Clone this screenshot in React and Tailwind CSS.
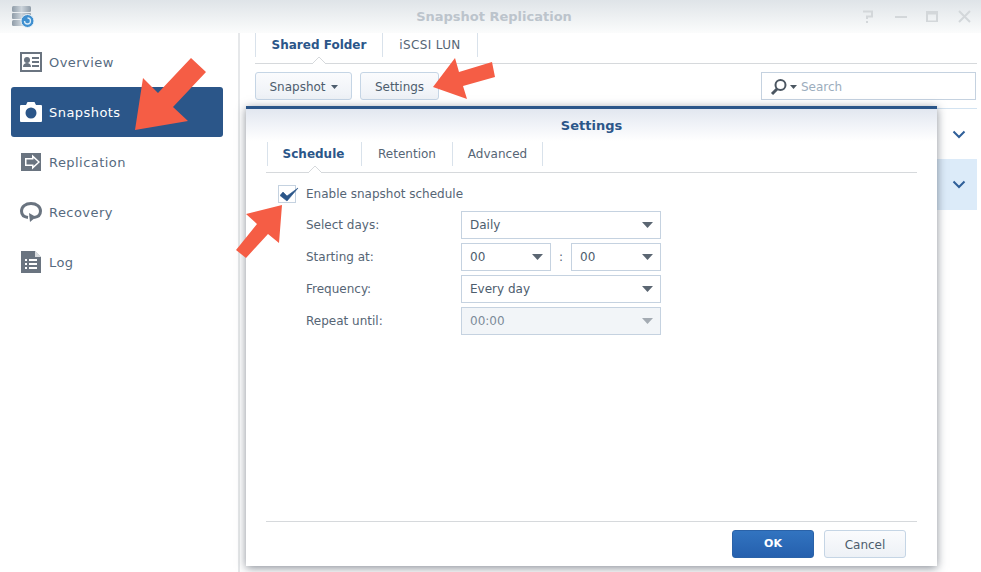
const font = { fontFamily: '"DejaVu Sans", Verdana, sans-serif' };

function Arrow({ points, x, y, w, h }) {
  return (
    <svg className="absolute z-20" style={{ left: x, top: y }} width={w} height={h} viewBox={`${x} ${y} ${w} ${h}`}>
      <polygon points={points} fill="#f55d45" />
    </svg>
  );
}

function OverviewIcon() {
  return (
    <svg width="22" height="20" viewBox="0 0 22 20">
      <path fillRule="evenodd" fill="#6a7480" d="M0 0h22v20H0zM2 2v16h18V2z" />
      <circle cx="7" cy="8" r="3" fill="#6a7480" />
      <path fill="#6a7480" d="M3 15c0-3 2-4 4-4s4 1 4 4zM12 5h7v2h-7zM12 9h7v2h-7zM12 13h7v2h-7z" />
    </svg>
  );
}
function CameraIcon() {
  return (
    <svg width="22" height="20" viewBox="0 0 22 20">
      <path fill="#fff" fillRule="evenodd" d="M1 3h5l1.500-3h7L16 3h5a1 1 0 0 1 1 1v15a1 1 0 0 1-1 1H1a1 1 0 0 1-1-1V4a1 1 0 0 1 1-1zM11 5.500a5.500 5.500 0 1 0 0 11 5.500 5.500 0 0 0 0-11z" />
    </svg>
  );
}
function ReplicationIcon() {
  return (
    <svg width="20" height="18" viewBox="0 0 20 18">
      <path fill="#6a7480" d="M0 0h20v18H0z" />
      <path fill="#fff" fillRule="evenodd" d="M11 1.500v3.500H4v8h7v3.500L19 9zM12.500 5l4.500 4-4.500 4v-1.500H5.500v-5h7z" />
    </svg>
  );
}
function RecoveryIcon() {
  return (
    <svg width="22" height="20" viewBox="0 0 22 20">
      <path fill="none" stroke="#6a7480" strokeWidth="3" d="M8 15.500C4 15 1.500 12.500 1.500 9 1.500 4.500 5.500 1.500 11 1.500s9.500 3 9.500 7.500c0 3.500-2.500 6-6.500 6.500" />
      <path fill="#6a7480" d="M9 11l7 4-6 5z" />
    </svg>
  );
}
function LogIcon() {
  return (
    <svg width="20" height="22" viewBox="0 0 20 22">
      <path fill="#6a7480" fillRule="evenodd" d="M0 0h14l6 6v16H0zM4 8v2h2V8zM8 8v2h8V8zM4 12v2h2v-2zM8 12v2h8v-2zM4 16v2h2v-2zM8 16v2h8v-2z" />
      <path fill="#fff" d="M14 0v6h6z" fillOpacity="0.75" />
    </svg>
  );
}

function NavItem({ icon, label, active }) {
  return (
    <div className={`h-[50px] flex items-center rounded-[3px] pl-[9px] ${active ? "bg-[#2b5689] text-white" : "text-[#566a80]"}`}>
      <span className="w-[22px] flex justify-center shrink-0">{icon}</span>
      <span className="ml-[7px] mt-px text-[13px] tracking-[0.45px]">{label}</span>
    </div>
  );
}

function Chevron() {
  return (
    <svg width="14" height="9" viewBox="0 0 14 9">
      <path d="M1.500 1.500 7 7l5.500-5.500" fill="none" stroke="#2f5f99" strokeWidth="2" />
    </svg>
  );
}

function Caret({ dim }) {
  return (
    <svg width="14" height="7" viewBox="0 0 14 7" className="shrink-0">
      <path d="M0 0h11L5.500 6z" fill={dim ? "#a4abb3" : "#5b6672"} />
    </svg>
  );
}

function Select({ value, disabled, className }) {
  return (
    <div className={`h-7 border border-[#c5d2e0] flex items-center justify-between pl-[8px] pr-[4px] ${disabled ? "bg-[#f2f5f8] text-[#7d8b99]" : "bg-white text-[#4d5d6d]"} ${className}`}>
      <span>{value}</span>
      <Caret dim={disabled} />
    </div>
  );
}

function FormRow({ label, children }) {
  return (
    <div className="flex items-center h-7">
      <span className="w-[155px] text-[#566575]">{label}</span>
      {children}
    </div>
  );
}

function TabCaret() {
  return (
    <svg width="14" height="7" viewBox="0 0 14 7" className="absolute bottom-[-7px] left-1/2 -translate-x-1/2">
      <path d="M0 7 7 0l7 7" fill="#fff" stroke="#d6d9dc" />
    </svg>
  );
}

export default function App() {
  return (
    <div style={font} className="relative w-[981px] h-[572px] overflow-hidden bg-white text-xs">
      <header className="h-[33px] bg-gradient-to-b from-[#dfe4e8] to-[#fbfcfc] flex items-center pl-[12px] pr-[8px]">
        <svg width="22" height="22" viewBox="0 0 22 22" className="shrink-0 mt-[1px]">
          <defs>
            <linearGradient id="db" x1="0" y1="0" x2="1" y2="0">
              <stop offset="0" stopColor="#8f9ca8" />
              <stop offset="0.5" stopColor="#cdd5dc" />
              <stop offset="1" stopColor="#8f9ca8" />
            </linearGradient>
          </defs>
          <rect x="0" y="0" width="19" height="6" rx="1.500" fill="url(#db)" />
          <rect x="0" y="7" width="19" height="6" rx="1" fill="url(#db)" />
          <rect x="0" y="14" width="19" height="6" rx="1.500" fill="url(#db)" />
          <circle cx="15.500" cy="15" r="6.500" fill="#3f8fcf" stroke="#eaf2f8" />
          <path d="M12.500 15a3 3 0 1 0 3-3" fill="none" stroke="#d8ebf8" strokeWidth="1.300" />
        </svg>
        <div className="flex-1 text-center text-[13px] font-bold text-[#bcc4cc] pl-[93px]">Snapshot Replication</div>
        <div className="flex items-center gap-[16px]">
          <svg width="16" height="14" viewBox="0 0 16 14"><path d="M2 1.500h9v5H6V9M6 11v2" fill="none" stroke="#d3d7da" strokeWidth="2" /></svg>
          <svg width="16" height="14" viewBox="0 0 16 14"><path d="M2 6h12v2H2z" fill="#d3d7da" /></svg>
          <svg width="16" height="14" viewBox="0 0 16 14"><path d="M1 1h12v11H1zM3 4.500v6h8v-6z" fill="#d3d7da" fillRule="evenodd" /></svg>
          <svg width="16" height="14" viewBox="0 0 16 14"><path d="M2 1l11 11M13 1 2 12" stroke="#d3d7da" strokeWidth="2" /></svg>
        </div>
      </header>

      <div className="flex h-[539px]">
        <aside className="w-[240px] shrink-0 border-r-2 border-[#e6e8ea] pl-[11px] pr-[15px] pt-[4px]">
          <NavItem icon={<OverviewIcon />} label="Overview" />
          <NavItem icon={<CameraIcon />} label="Snapshots" active />
          <NavItem icon={<ReplicationIcon />} label="Replication" />
          <NavItem icon={<RecoveryIcon />} label="Recovery" />
          <NavItem icon={<LogIcon />} label="Log" />
        </aside>

        <main className="flex-1 pl-[15px] pr-[4px]">
          <div className="flex h-[31px] border-b border-[#d6d9dc]">
            <div className="relative h-[24px] w-[128px] flex items-center justify-center border-l border-r border-[#d9e2eb] font-bold text-[#2b5689]">
              Shared Folder
              <TabCaret />
            </div>
            <div className="h-[24px] w-[95px] flex items-center justify-center border-r border-[#d9e2eb] text-[#566575] tracking-[0.35px]">iSCSI LUN</div>
          </div>

          <div className="flex items-center justify-between mt-[8px]">
            <div className="flex gap-2">
              <button className="h-7 w-[97px] pt-px rounded-[3px] border border-[#c5d5e5] bg-gradient-to-b from-[#fafbfd] to-[#edf1f6] text-[#4d5d6d] flex items-center justify-center gap-[5px]">
                Snapshot
                <svg width="7" height="4" viewBox="0 0 7 4"><path d="M0 0h7L3.500 4z" fill="#4d5d6d" /></svg>
              </button>
              <button className="h-7 w-[79px] pt-px rounded-[3px] border border-[#c5d5e5] bg-gradient-to-b from-[#fafbfd] to-[#edf1f6] text-[#4d5d6d]">Settings</button>
            </div>
            <div className="h-7 w-[215px] mr-px pt-px border border-[#c5d2e0] flex items-center pl-[8px]">
              <svg width="18" height="18" viewBox="0 0 18 18" className="shrink-0">
                <circle cx="10.500" cy="7" r="5" fill="none" stroke="#4b5661" strokeWidth="2" />
                <path d="M7 11 2 16" stroke="#4b5661" strokeWidth="3" />
              </svg>
              <svg width="7" height="4" viewBox="0 0 7 4" className="ml-[2px]"><path d="M0 0h7L3.500 4z" fill="#4b5661" /></svg>
              <span className="ml-[4px] text-[#9cadbd]">Search</span>
            </div>
          </div>

          <div className="mt-[8px] border-t border-[#d3e3f1]">
            <div className="h-[50px] flex items-center justify-end pr-[11px]"><Chevron /></div>
            <div className="h-[51px] bg-[#dcebf9] flex items-center justify-end pr-[11px]"><Chevron /></div>
          </div>
        </main>
      </div>

      {/* Modal dialog overlaying the window */}
      <section className="absolute z-10 left-[246px] top-[106px] w-[691px] h-[460px] bg-white border-t-[3px] border-[#2b5689] shadow-[0_2px_9px_rgba(40,50,65,0.55)] flex flex-col">
        <div className="h-[32px] pt-[2px] shrink-0 bg-gradient-to-b from-[#e2e7f0] to-[#ffffff] flex items-center justify-center font-bold text-[13px] text-[#2b5689]">Settings</div>
        <div className="mx-[20px] flex h-[32px] shrink-0 border-b border-[#d6d9dc] pt-px">
          <div className="relative h-[24px] w-[95px] pr-[2px] ml-px flex items-center justify-center border-l border-r border-[#d9e2eb] font-bold text-[#2b5689]">
            Schedule
            <TabCaret />
          </div>
          <div className="h-[24px] w-[91px] flex items-center justify-center border-r border-[#d9e2eb] text-[#566575]">Retention</div>
          <div className="h-[24px] w-[90px] flex items-center justify-center border-r border-[#d9e2eb] text-[#566575]">Advanced</div>
        </div>

        <div className="flex-1 pl-[32px] pt-[12px]">
          <div className="flex items-center h-[18px]">
            <span className="relative w-[18px] h-[18px] border border-[#c5d2e0] shrink-0">
              <svg width="20" height="17" viewBox="0 0 20 17" className="absolute left-[1px] top-[-1px]">
                <path d="M0 10.500 3 7l4 4L18 3 7 16z" fill="#2b5689" stroke="#2b5689" strokeWidth="0.600" strokeLinejoin="round" />
              </svg>
            </span>
            <span className="ml-[10px] text-[#566575]">Enable snapshot schedule</span>
          </div>
          <div className="ml-[28px] mt-[8px] flex flex-col gap-1">
            <FormRow label="Select days:"><Select value="Daily" className="w-[200px]" /></FormRow>
            <FormRow label="Starting at:">
              <div className="flex items-center w-[200px]">
                <Select value="00" className="w-[90px]" />
                <span className="w-[20px] text-center text-[#566575]">:</span>
                <Select value="00" className="w-[90px]" />
              </div>
            </FormRow>
            <FormRow label="Frequency:"><Select value="Every day" className="w-[200px]" /></FormRow>
            <FormRow label="Repeat until:"><Select value="00:00" disabled className="w-[200px]" /></FormRow>
          </div>
        </div>

        <div className="mx-[20px] mb-[8px] h-[37px] pt-[8px] shrink-0 border-t border-[#d6d9dc] flex justify-end gap-[10px] pr-[11px]">
          <button className="w-[82px] h-7 pt-px rounded-[3px] border border-[#2a62a8] bg-gradient-to-b from-[#3274c0] to-[#2560ae] text-white font-bold text-[11px]">OK</button>
          <button className="w-[82px] h-7 pt-px rounded-[3px] border border-[#c5d5e5] bg-gradient-to-b from-[#fafbfd] to-[#edf1f6] text-[#4d5d6d]">Cancel</button>
        </div>
      </section>

      <Arrow x={130} y={55} w={80} h={80} points="135,130 143,78 158,93 191,58 206,72 173,107 188,121" />
      <Arrow x={430} y={55} w={70} h={48} points="433,87 455,58 459,72 492,62 495,77 463,86 467,99" />
      <Arrow x={232} y={202} w={54} h={60} points="282,205 246,214 257,224 236,250 246,258 268,234 279,243" />
    </div>
  );
}
